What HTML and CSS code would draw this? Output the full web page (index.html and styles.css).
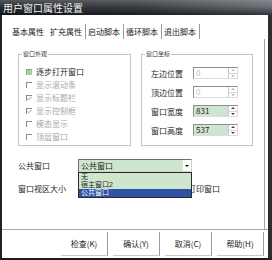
FILE: index.html
```html
<!DOCTYPE html>
<html lang="zh">
<head>
    <meta charset="UTF-8">
    <title>用户窗口属性设置</title>
    <link rel="stylesheet" href="styles.css">
</head>
<body>
    <div class="dialog">
        <div class="titlebar">用户窗口属性设置</div>

        <div class="tabs">
            <span class="tab no-sep">基本属性</span>
            <span class="tab active">扩充属性</span>
            <span class="tab">启动脚本</span>
            <span class="tab">循环脚本</span>
            <span class="tab">退出脚本</span>
        </div>

        <div class="panel">
            <div class="groups">
                <fieldset class="group look">
                    <legend>窗口外观</legend>
                    <div class="look-body">
                        <div class="check"><span class="box green"></span>逐步打开窗口</div>
                        <div class="check off"><span class="box"></span>显示滚动条</div>
                        <div class="check off"><span class="box"><svg width="5" height="5" viewBox="0 0 5 5"><path d="M0.3 2.2 L1.8 3.8 L4.8 0.6" stroke="#9a9a9a" stroke-width="1" fill="none"/></svg></span>显示标题栏</div>
                        <div class="check off"><span class="box"><svg width="5" height="5" viewBox="0 0 5 5"><path d="M0.3 2.2 L1.8 3.8 L4.8 0.6" stroke="#9a9a9a" stroke-width="1" fill="none"/></svg></span>显示控制框</div>
                        <div class="check off"><span class="box"></span>模态显示</div>
                        <div class="check off"><span class="box"></span>顶层窗口</div>
                    </div>
                </fieldset>

                <fieldset class="group coords">
                    <legend>窗口坐标</legend>
                    <div class="coords-body">
                        <div class="field">
                            <span class="lbl">左边位置</span>
                            <span class="spin disabled"><span class="val">0</span><span class="arrows"><i class="up"></i><i class="down"></i></span></span>
                        </div>
                        <div class="field">
                            <span class="lbl">顶边位置</span>
                            <span class="spin disabled"><span class="val">0</span><span class="arrows"><i class="up"></i><i class="down"></i></span></span>
                        </div>
                        <div class="field">
                            <span class="lbl">窗口宽度</span>
                            <span class="spin green"><span class="val">831</span><span class="arrows"><i class="up"></i><i class="down"></i></span></span>
                        </div>
                        <div class="field">
                            <span class="lbl">窗口高度</span>
                            <span class="spin green"><span class="val">537</span><span class="arrows"><i class="up"></i><i class="down"></i></span></span>
                        </div>
                    </div>
                </fieldset>
            </div>

            <div class="row combo-row">
                <span class="row-label">公共窗口</span>
                <div class="combo">
                    <span class="combo-text">公共窗口</span>
                    <span class="combo-btn"><i class="caret"></i></span>
                    <ul class="droplist">
                        <li>无</li>
                        <li>宿主窗口2</li>
                        <li class="sel">公共窗口</li>
                    </ul>
                </div>
            </div>

            <div class="row size-row">
                <span class="row-label">窗口视区大小</span>
                <span class="tail">打印窗口</span>
            </div>
        </div>

        <div class="footer">
            <button class="btn">检查(K)</button>
            <button class="btn">确认(Y)</button>
            <button class="btn">取消(C)</button>
            <button class="btn">帮助(H)</button>
        </div>
    </div>
</body>
</html>
```

FILE: styles.css
```css
body {
    margin: 0;
    font-family: "Noto Sans CJK SC", "Liberation Sans", sans-serif;
    font-size: 8px;
    color: #1e1e1e;
    background: #fff;
}
.dialog {
    width: 272px;
    height: 260px;
    box-sizing: border-box;
    border-left: 2px solid #202327;
    border-right: 4px solid #2b2e33;
    border-bottom: 2px solid #1c1e22;
    display: flex;
    flex-direction: column;
    background: #fff;
}
.titlebar {
    height: 15px;
    line-height: 15px;
    margin: 0 -4px 0 -2px;
    padding-left: 3px;
    font-size: 10px;
    color: #f2f2f2;
    background:
        linear-gradient(rgba(255,255,255,0.18), rgba(0,0,0,0) 45%, rgba(0,0,0,0.55)),
        linear-gradient(to right, #2c2f34, #3a3e44 50%, #6b7077);
}
.tabs {
    display: flex;
    height: 15px;
    margin-top: 9px;
    padding-left: 8px;
    line-height: 15px;
    color: #222;
}
.tab {
    padding: 0 3px 0 2px;
    border-right: 1px solid #9a9a9a;
}
.tab.no-sep {
    border-right-color: transparent;
}
.panel {
    flex: 1;
    margin-right: 3px;
    border-right: 1px solid #a3a3a3;
    padding: 10px 0 0 16px;
}
.groups {
    display: flex;
    gap: 10px;
}
.group {
    margin: 0;
    padding: 0 0 0 3px;
    border: 1px solid #c4c4c4;
    box-sizing: border-box;
    min-width: 0;
}
.group legend {
    padding: 0 1px;
    font-size: 6px;
    line-height: 10px;
    color: #333;
}
.look {
    width: 113px;
}
.coords {
    width: 112px;
}
.look-body {
    padding: 6px 0 2px 4px;
}
.check {
    display: flex;
    align-items: center;
    height: 13px;
    white-space: nowrap;
}
.check.off {
    color: #a9a9a9;
}
.box {
    width: 6px;
    height: 6px;
    box-sizing: border-box;
    border-top: 1px solid #8c8c8c;
    border-left: 1px solid #8c8c8c;
    margin-right: 4px;
    display: flex;
}
.box.green {
    background: #a3d3a3;
    border-color: #7fae7f;
}
.coords-body {
    padding: 8px 0 0 6px;
    display: flex;
    flex-direction: column;
    gap: 7px;
}
.field {
    display: flex;
    align-items: center;
    height: 12px;
}
.field .lbl {
    width: 42px;
    white-space: nowrap;
}
.spin {
    display: flex;
    width: 45px;
    height: 12px;
    box-sizing: border-box;
    border: 1px solid;
    border-color: #8d8d8d #dcdcdc #dcdcdc #8d8d8d;
    background: #fff;
}
.spin.green {
    background: #cde6cd;
}
.spin .val {
    flex: 1;
    padding-left: 2px;
    line-height: 10px;
}
.spin.disabled .val {
    color: #c0c0c0;
}
.arrows {
    width: 8px;
    display: flex;
    flex-direction: column;
    border-left: 1px solid #c8c8c8;
    background: #fff;
}
.arrows i {
    flex: 1;
    display: flex;
    align-items: center;
    justify-content: center;
}
.arrows i + i {
    border-top: 1px solid #d4d4d4;
}
.arrows i::before {
    content: '';
    border-left: 2px solid transparent;
    border-right: 2px solid transparent;
}
.arrows .up::before {
    border-bottom: 2px solid #444;
}
.arrows .down::before {
    border-top: 2px solid #444;
}
.spin.disabled .arrows .up::before {
    border-bottom-color: #b8b8b8;
}
.spin.disabled .arrows .down::before {
    border-top-color: #b8b8b8;
}
.row {
    display: flex;
    align-items: center;
    height: 13px;
    white-space: nowrap;
}
.combo-row {
    margin-top: 13px;
}
.size-row {
    margin-top: 10px;
    height: 12px;
}
.row-label {
    width: 60px;
}
.combo {
    position: relative;
    display: flex;
    width: 114px;
    height: 13px;
    box-sizing: border-box;
    border: 1px solid;
    border-color: #6d6d6d #d0d0d0 #d0d0d0 #6d6d6d;
    background: #cde6cd;
}
.combo-text {
    flex: 1;
    padding-left: 2px;
    line-height: 11px;
}
.combo-btn {
    width: 8px;
    background: #fff;
    display: flex;
    align-items: center;
    justify-content: center;
    border-left: 1px solid #e0e0e0;
}
.caret {
    border-left: 2px solid transparent;
    border-right: 2px solid transparent;
    border-top: 2px solid #111;
}
.droplist {
    position: absolute;
    top: 12px;
    left: -1px;
    width: 114px;
    box-sizing: border-box;
    margin: 0;
    padding: 0;
    list-style: none;
    border: 1px solid #2a2a2a;
    background: #cde6cd;
    font-family: "Liberation Sans", "Noto Sans CJK SC", sans-serif;
    font-size: 7px;
    z-index: 2;
}
.droplist li {
    height: 8px;
    line-height: 8px;
    padding-left: 2px;
    overflow: hidden;
}
.droplist li.sel {
    background: #2d52a6;
    color: #fff;
}
.tail {
    margin-left: 110px;
}
.footer {
    height: 29px;
    box-sizing: border-box;
    border-top: 1px solid #a9a9a9;
    display: flex;
    justify-content: flex-end;
    gap: 5px;
    padding: 2px 4px 0 0;
}
.btn {
    width: 47px;
    height: 24px;
    box-sizing: border-box;
    border: none;
    border-right: 1px solid #9d9d9d;
    border-bottom: 1px solid #c9c9c9;
    background: #fff;
    font: inherit;
    color: #222;
    padding: 0;
    line-height: 23px;
}
```
